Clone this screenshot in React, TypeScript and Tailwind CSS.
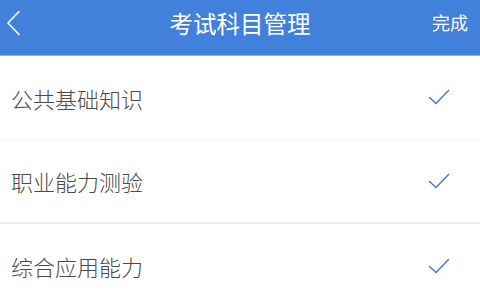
const subjects = ["公共基础知识", "职业能力测验", "综合应用能力"];

function Check() {
  return (
    <svg width="22" height="17" viewBox="0 0 22 17" fill="none">
      <path d="M1.5 8.5 L8 14.5 L20.5 1.5" stroke="#4a7bc9" strokeWidth="1.5" strokeLinecap="round" strokeLinejoin="round" />
    </svg>
  );
}

export default function App() {
  return (
    <div className="w-[480px] h-[297px] overflow-hidden bg-white font-['Noto_Sans_CJK_SC',sans-serif]">
      <div className="relative flex h-[56px] items-center justify-center bg-[#4180db] pb-[7px] border-b border-[#8fb3ea]">
        <svg className="absolute left-[6px] top-[10px]" width="16" height="26" viewBox="0 0 16 26" fill="none">
          <path d="M13 1.5 L2 13 L13 24.5" stroke="white" strokeWidth="1.6" strokeLinecap="round" strokeLinejoin="round" />
        </svg>
        <span className="text-[23.5px] leading-none text-white">考试科目管理</span>
        <span className="absolute right-[12px] top-[13px] text-[18px] leading-none text-white">完成</span>
      </div>
      <div className="flex flex-col">
        {subjects.map((s, i) => (
          <div
            key={s}
            className={`flex h-[84px] items-center justify-between pl-[11px] pr-[30px] ${
              i === 0 ? "border-b border-[#f4f4f4]" : i === 1 ? "border-b-2 border-[#ebebeb]" : ""
            }`}
          >
            <span className="text-[22px] leading-none font-light text-[#4a4a4a]">{s}</span>
            <Check />
          </div>
        ))}
      </div>
    </div>
  );
}
